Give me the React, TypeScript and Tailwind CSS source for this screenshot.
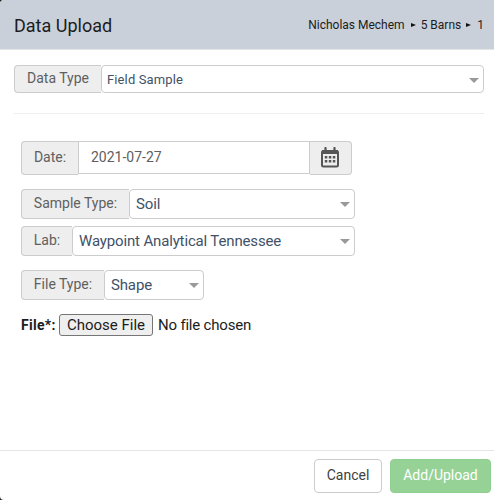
import { ReactNode } from "react";

function Caret() {
  return (
    <svg className="mt-px shrink-0" width="10" height="5" viewBox="0 0 10 5">
      <path d="M0 0h10L5 5z" fill="#999" />
    </svg>
  );
}

function Arrow({ className }: { className: string }) {
  return (
    <svg className={className} width="5" height="4" viewBox="0 0 5 4">
      <path d="M0 0l5 2-5 2z" fill="#111" />
    </svg>
  );
}

function Addon({ children, className = "" }: { children: ReactNode; className?: string }) {
  return (
    <span className={`flex shrink-0 justify-center rounded-l border border-r-0 border-[#ccc] bg-[#eee] text-sm leading-5 text-[#606060] ${className}`}>
      {children}
    </span>
  );
}

function Select({ label, value, className, labelClassName, valueClassName = "pl-[6px] text-[15px] tracking-[-0.15px]" }: {
  label: string;
  value: string;
  className: string;
  labelClassName: string;
  valueClassName?: string;
}) {
  return (
    <div className={`flex ${className}`}>
      <Addon className={labelClassName}>{label}</Addon>
      <div className={`flex flex-1 items-center justify-between rounded border border-[#ccc] bg-white pr-1 text-[#3f5267] ${valueClassName}`}>
        <span className="whitespace-nowrap">{value}</span>
        <Caret />
      </div>
    </div>
  );
}

export default function App() {
  return (
    <div className="h-[500px] w-[494px] overflow-hidden bg-[#222] font-['Roboto',sans-serif]">
      <div className="flex h-full flex-col rounded-l bg-white">
        <header className="flex h-[50px] items-center justify-between rounded-tl border-b border-[#e5e5e5] bg-[#cad0d9] pr-[10px] pl-[14px] text-[#1c1c1c]">
          <h1 className="pt-[3px] text-lg">Data Upload</h1>
          <div className="flex items-center text-xs">
            <span>Nicholas Mechem</span>
            <Arrow className="mr-[5px] ml-1.5" />
            <span>5 Barns</span>
            <Arrow className="mr-1.5 ml-[5px]" />
            <span>1</span>
          </div>
        </header>

        <main className="flex-1 pt-[15px] pr-[10px] pl-[14px]">
          <Select
            label="Data Type"
            value="Field Sample"
            className="h-7 w-[470px]"
            labelClassName="w-[87px] pt-[2px]"
            valueClassName="pl-[5px] pt-px text-[13px] tracking-[0.12px]"
          />
          <hr className="mt-5 border-[#eee]" />

          <div className="pt-[27px] pl-[7px]">
            <div className="flex h-[34px] w-[331px]">
              <Addon className="w-[57px] pt-[5px]">Date:</Addon>
              <div className="h-[33px] flex-1 border border-[#ccc] pt-[5px] pl-3 text-sm leading-5 text-[#606060]">2021-07-27</div>
              <span className="flex w-[42px] justify-center rounded-r border border-l-0 border-[#ccc] bg-[#eee] pt-[5px] pr-px">
                <svg width="18" height="21" viewBox="0 0 18 21" fill="none">
                  <path d="M4.5 1v3M13.5 1v3" stroke="#555" strokeWidth="2.2" strokeLinecap="round" />
                  <rect x="1" y="4" width="16" height="15.5" rx="1.5" stroke="#555" strokeWidth="2" />
                  <path d="M1 3h16v4H1z" fill="#555" />
                  <path d="M3.8 9h2.5v2.5H3.8zM7.8 9h2.5v2.5H7.8zM11.8 9h2.5v2.5h-2.5zM3.8 13h2.5v2.5H3.8zM7.8 13h2.5v2.5H7.8zM11.8 13h2.5v2.5h-2.5z" fill="#555" />
                </svg>
              </span>
            </div>
            <Select label="Sample Type:" value="Soil" className="mt-[14px] h-[30px] w-[334px]" labelClassName="w-[108px] pt-[3px]" />
            <Select label="Lab:" value="Waypoint Analytical Tennessee" className="mt-[7px] h-[30px] w-[334px]" labelClassName="w-[51px] pt-[3px]" />
            <Select label="File Type:" value="Shape" className="mt-[14px] h-[30px] w-[183px]" labelClassName="w-[83px] pt-[3px]" />
            <div className="mt-[14px] flex h-[22px] items-center text-[15px] text-[#1c1c1c]">
              <span className="w-[38px] text-sm font-bold tracking-[0.3px]">File*:</span>
              <button className="h-[22px] w-[94px] rounded-[3px] border border-[#767676] bg-[#efefef] leading-5">Choose File</button>
              <span className="ml-[5px] tracking-[-0.2px]">No file chosen</span>
            </div>
          </div>
        </main>

        <footer className="flex h-[50px] justify-end gap-2 border-t border-[#e5e5e5] pt-2 pr-[3px] text-sm">
          <button className="h-[34px] w-[68px] rounded border border-[#ccc] bg-white pb-0.5 text-[#404040]">Cancel</button>
          <button className="h-[34px] w-[101px] rounded border border-[#8ed08e] bg-[#96d296] pb-0.5 text-white">Add/Upload</button>
        </footer>
      </div>
    </div>
  );
}
